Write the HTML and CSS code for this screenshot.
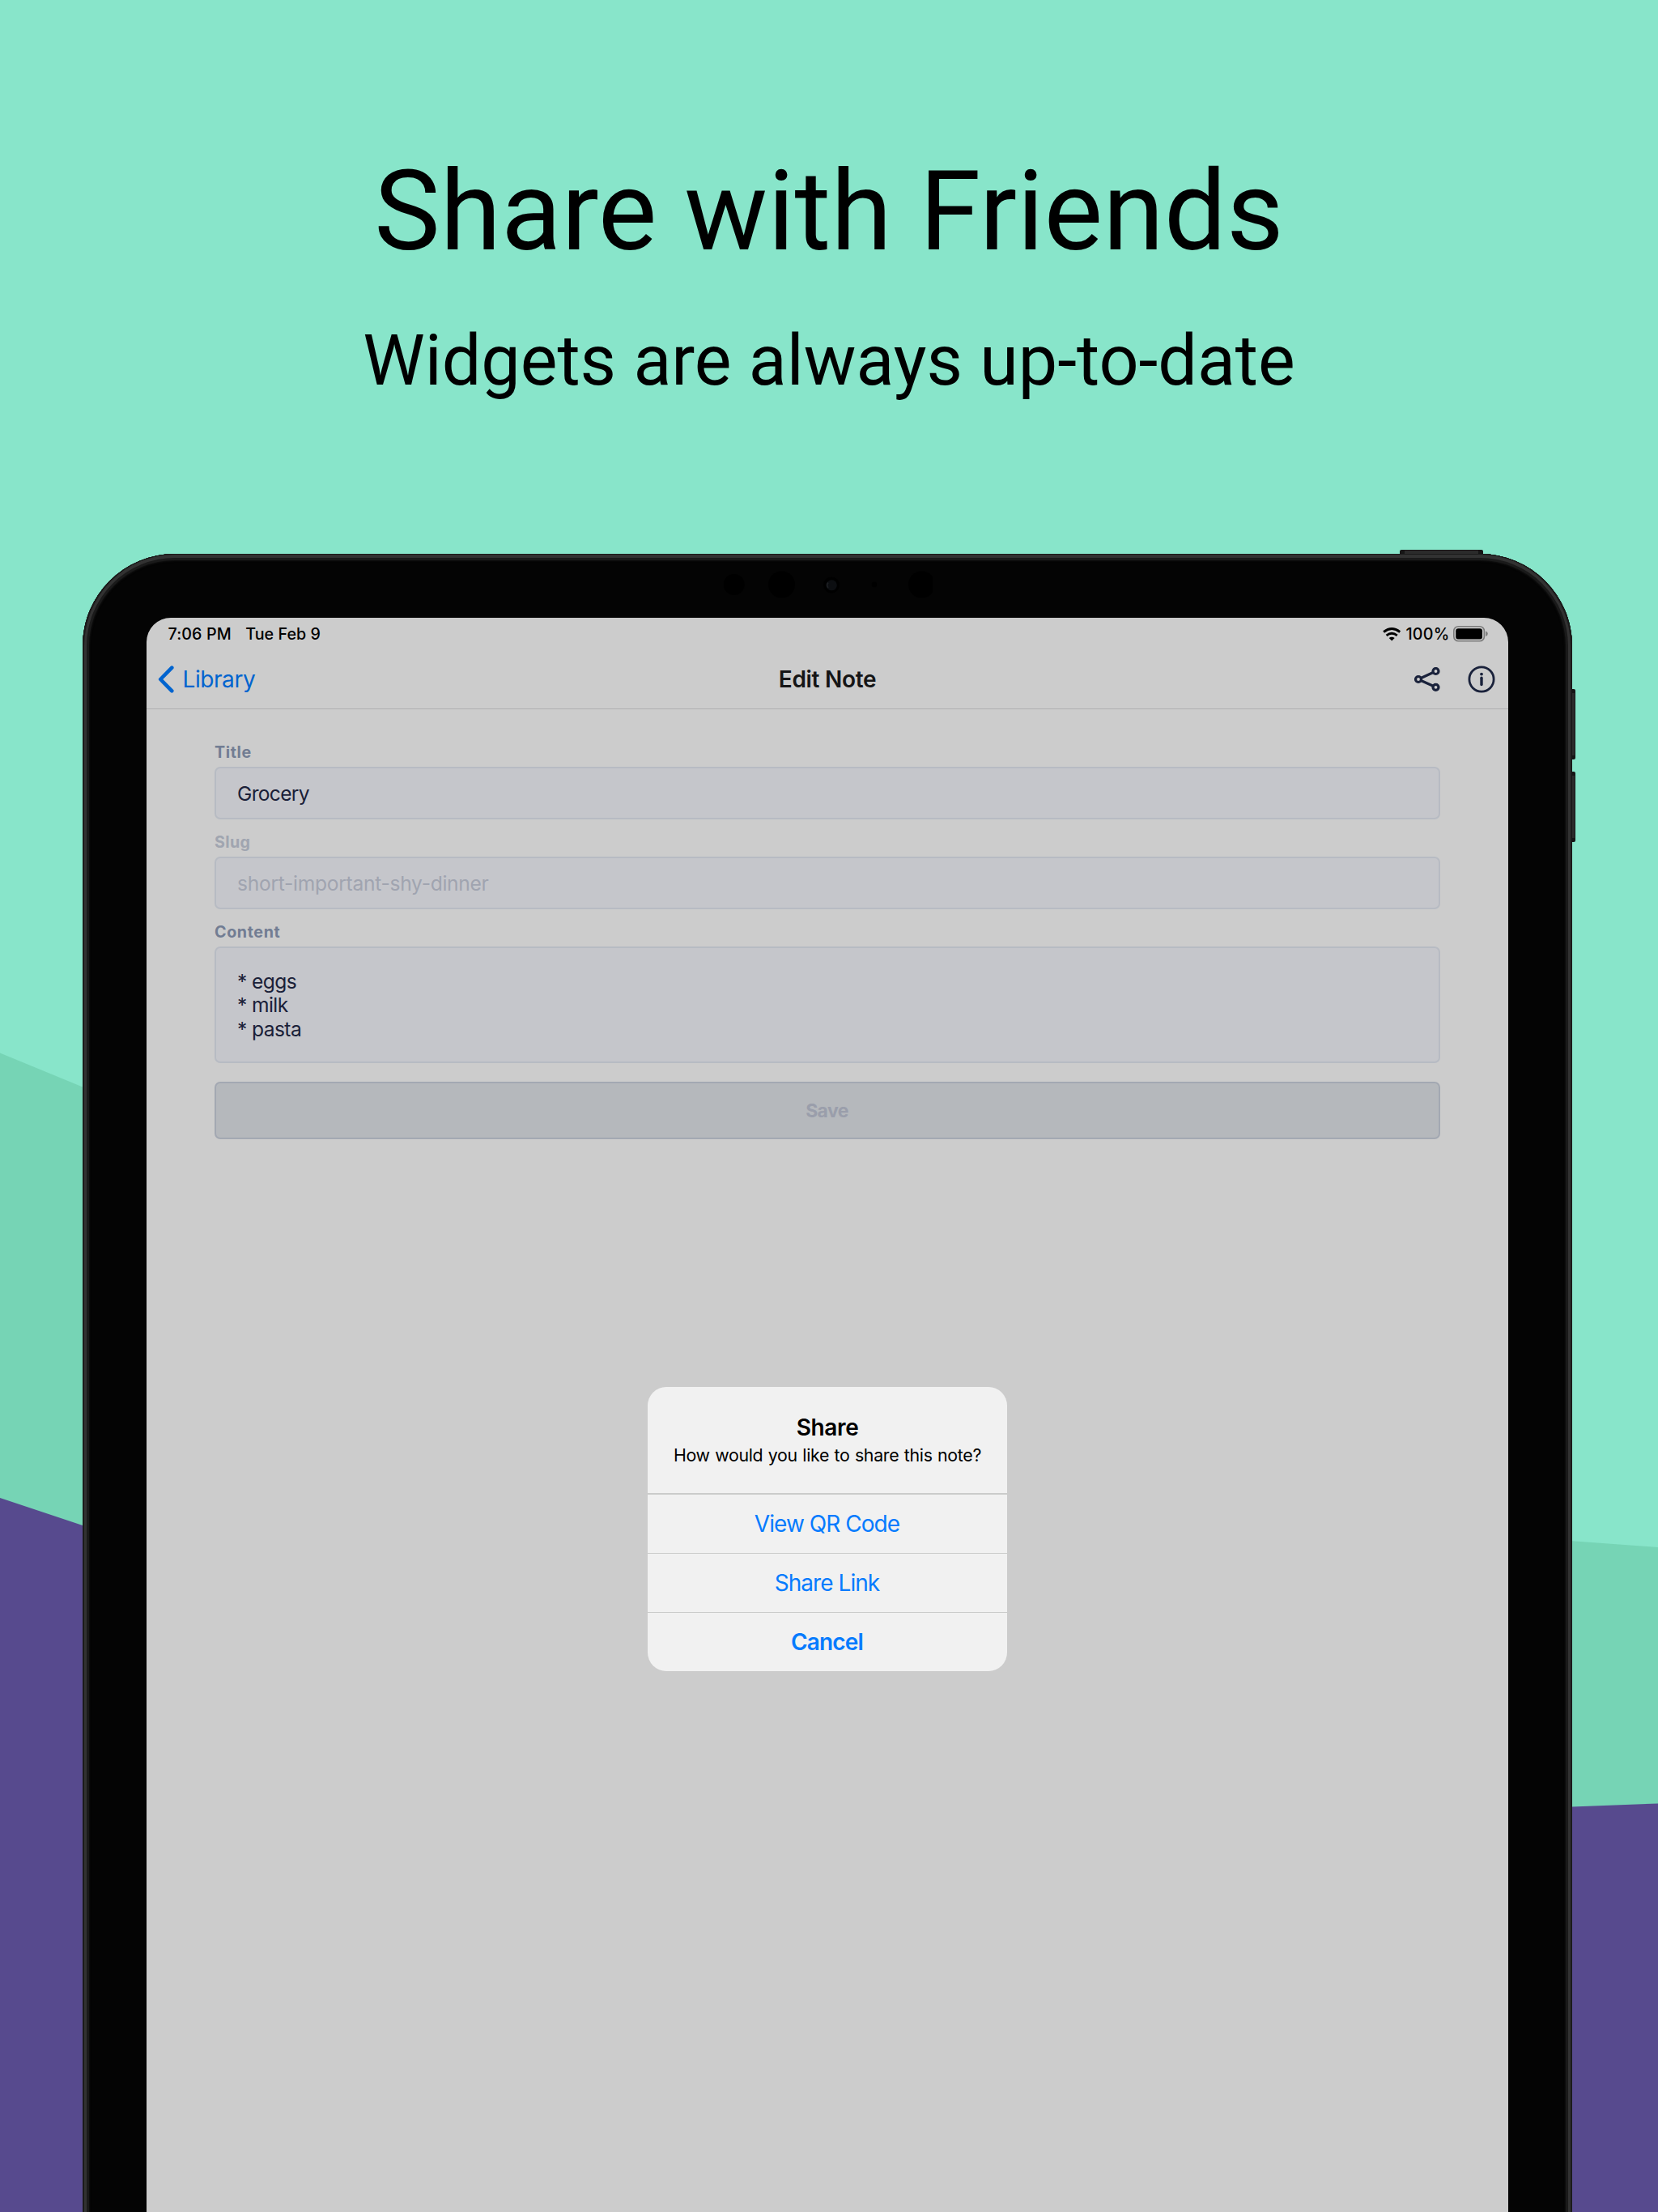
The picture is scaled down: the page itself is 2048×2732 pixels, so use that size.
FILE: index.html
```html
<!DOCTYPE html>
<html lang="en">
<head>
<meta charset="utf-8">
<title>Share with Friends</title>
<link rel="stylesheet" href="styles.css">
</head>
<body>
<main class="poster">
  <svg class="backdrop" viewBox="0 0 2048 2732" aria-hidden="true">
    <path fill="#76d4b5" d="M0 1300.5 L102 1342.5 L1000 1720 L1942 1903.3 L2048 1911 V2732 H0Z"/>
    <path fill="#574a8e" d="M0 1850 L102 1884 L1000 2180 L1942 2231.5 L2048 2227.5 V2732 H0Z"/>
  </svg>
  <header class="headline">
    <h1 class="headline-title">Share with Friends</h1>
    <p class="headline-sub">Widgets are always up-to-date</p>
  </header>
  <div class="tablet">
    <span class="key key-power"></span>
    <span class="key key-up"></span>
    <span class="key key-down"></span>
    <div class="bezel">
      <svg class="sensors" viewBox="0 0 260 40" aria-hidden="true">
        <g fill="#000">
          <circle cx="14.7" cy="20" r="13"/>
          <circle cx="73.5" cy="20" r="16.5"/>
          <circle cx="135" cy="20.5" r="10"/>
          <circle cx="188" cy="20" r="3.3"/>
          <circle cx="246.5" cy="20" r="16.5"/>
        </g>
        <circle cx="135.3" cy="20.8" r="6.5" fill="#0c0e11"/>
        <path d="M131 17.5 a5 5 0 0 0 0 6.5" fill="none" stroke="#1c1e22" stroke-width="2"/>
      </svg>
      <section class="screen">
        <div class="status">
          <div class="status-group">
            <span class="status-time">7:06 PM</span>
            <span class="status-date">Tue Feb 9</span>
          </div>
          <div class="status-group">
            <svg class="wifi" viewBox="0 0 22.4 17" aria-hidden="true">
              <g fill="none" stroke="#000">
                <path stroke-width="2.9" d="M1.1 5.5 Q11.2 -2.5 21.3 5.5"/>
                <path stroke-width="2.7" d="M4.6 9.9 Q11.2 4.6 17.8 9.9"/>
              </g>
              <path d="M7.7 13 Q11.2 10.4 14.7 13 L11.2 16.6Z"/>
            </svg>
            <span class="status-level">100%</span>
            <svg class="battery" viewBox="0 0 44 20" aria-hidden="true">
              <rect x=".8" y=".8" width="37.6" height="18" rx="5.5" fill="none" stroke="#7b7b7b" stroke-width="1.6"/>
              <rect x="3.2" y="3.2" width="32.8" height="13.2" rx="3" fill="#000"/>
              <path d="M40.2 6.6 Q42.8 7.6 42.8 9.8 T40.2 13Z" fill="#7b7b7b"/>
            </svg>
          </div>
        </div>
        <nav class="nav">
          <a class="back">
            <svg class="chevron" viewBox="0 0 20 34" aria-hidden="true">
              <path d="M17.3 2.7 L3.2 17 L17.3 31.3" fill="none" stroke="#0064cf" stroke-width="4.6" stroke-linecap="round" stroke-linejoin="round"/>
            </svg>
            <span>Library</span>
          </a>
          <h2 class="nav-title">Edit Note</h2>
          <div class="nav-actions">
            <svg class="share" viewBox="0 0 32 30" aria-hidden="true">
              <g fill="none" stroke="#1a223b" stroke-width="3.2">
                <circle cx="5" cy="15" r="3.5"/>
                <circle cx="26.5" cy="5" r="3.5"/>
                <circle cx="26.5" cy="24.8" r="3.5"/>
                <path d="M8.2 13.5 L23.3 6.5 M8.2 16.5 L23.3 23.3"/>
              </g>
            </svg>
            <svg class="info" viewBox="0 0 34 34" aria-hidden="true">
              <circle cx="17" cy="17" r="15.1" fill="none" stroke="#1a223b" stroke-width="2.8"/>
              <circle cx="17" cy="10.6" r="1.9" fill="#1a223b"/>
              <path d="M17 15.3 V23.6" stroke="#1a223b" stroke-width="3.4" stroke-linecap="round"/>
            </svg>
          </div>
        </nav>
        <form class="form">
          <div class="field">
            <span class="label">Title</span>
            <div class="input input-title">Grocery</div>
          </div>
          <div class="field field-disabled">
            <span class="label">Slug</span>
            <div class="input">short-important-shy-dinner</div>
          </div>
          <div class="field">
            <span class="label">Content</span>
            <div class="input input-area">* eggs
* milk
* pasta</div>
          </div>
          <div class="save">Save</div>
        </form>
        <div class="dialog">
          <div class="dialog-head">
            <h3 class="dialog-title">Share</h3>
            <p class="dialog-text">How would you like to share this note?</p>
          </div>
          <div class="action action-qr">View QR Code</div>
          <div class="action">Share Link</div>
          <div class="action action-cancel">Cancel</div>
        </div>
      </section>
    </div>
  </div>
</main>
</body>
</html>
```
FILE: styles.css
```css
* { box-sizing: border-box; }
body { margin: 0; }
h1, h2, h3, p { margin: 0; font-weight: 400; }
svg { display: block; flex: none; }

.poster {
  position: relative;
  width: 2048px;
  height: 2732px;
  overflow: hidden;
  background: #88e5ca;
  display: flex;
  flex-direction: column;
}
.backdrop { position: absolute; inset: 0; width: 2048px; height: 2732px; }

.headline {
  position: relative;
  height: 684px;
  flex: none;
  padding-top: 181px;
  text-align: center;
  font-family: Roboto, sans-serif;
  color: #000;
}
.headline-title { font-size: 137px; line-height: 160px; }
.headline-sub { font-size: 86.2px; line-height: 100px; margin-top: 55px; }

/* The tablet runs past the bottom edge of the poster. */
.tablet {
  position: relative;
  flex: none;
  height: 2100px;
  width: 1840px;
  margin-left: 102px;
}
.bezel {
  position: relative;
  height: 100%;
  padding: 79px 79px 0;
  border-radius: 114px 114px 0 0;
  background: #040404;
  box-shadow:
    inset 0 1px 0 #1a1a1a,
    inset 2px 0 0 #1b1b1b,
    inset -2px 0 0 #1b1b1b,
    inset 0 0 0 5px #323232,
    inset 0 0 0 8px #1a1a1a,
    inset 0 0 2px 9px #101010;
}
.key { position: absolute; background: #2b2b2b; border: 0 solid #161616; }
.key-power { left: 1627px; top: -5px; width: 103px; height: 10px; border-width: 1px 6px 0; border-radius: 2px 2px 0 0; }
.key-up, .key-down { left: 1834px; width: 10px; height: 87px; border-width: 5px 1px 5px 0; border-radius: 0 2px 2px 0; }
.key-up { top: 167px; }
.key-down { top: 269px; }
.sensors { position: absolute; left: 790px; top: 18px; width: 260px; height: 40px; }

.screen {
  position: relative;
  height: 100%;
  background: #ccc;
  border-radius: 30px 30px 0 0;
  font-family: Inter, sans-serif;
  color: #1a2038;
}

.status {
  height: 40px;
  padding: 0 24px 0 26.5px;
  display: flex;
  justify-content: space-between;
  align-items: center;
  font-size: 19.7px;
  font-weight: 500;
  color: #000;
}
.status-group { display: flex; align-items: center; }
.status-time { letter-spacing: .1px; }
.status-date { margin-left: 17.5px; letter-spacing: .05px; }
.wifi { width: 22.4px; height: 17px; }
.status-level { margin-left: 6.5px; letter-spacing: .24px; }
.battery { width: 44px; height: 20px; margin-left: 4.5px; }

.nav {
  height: 73px;
  padding: 0 16px 0 14px;
  border-bottom: 1px solid #b0b0b1;
  display: grid;
  grid-template-columns: 1fr auto 1fr;
  align-items: center;
  font-size: 28px;
}
.back { display: flex; align-items: center; color: #0064cf; letter-spacing: -.42px; }
.chevron { width: 20px; height: 34px; margin-right: 10.5px; }
.nav-title { padding-left: 2px; font-size: 28px; font-weight: 600; letter-spacing: -.29px; color: #151516; }
.nav-actions { display: flex; justify-content: flex-end; align-items: center; gap: 34px; }
.share { width: 32px; height: 30px; }
.info { width: 34px; height: 34px; }

.form { padding: 40.3px 84px 0; display: flex; flex-direction: column; }
.field { margin-bottom: 14.6px; }
.label {
  display: block;
  padding-top: 1px;
  height: 24px;
  margin: 0 0 6.8px;
  font-size: 19.7px;
  line-height: 24px;
  font-weight: 700;
  letter-spacing: .6px;
  color: #727d93;
}
.input {
  height: 65.4px;
  padding: 1px 26px 0;
  border: 2px solid #b7bbc3;
  border-radius: 7px;
  background: #c5c6cb;
  font-size: 24.6px;
  line-height: 61.4px;
  letter-spacing: -.29px;
  color: #1a2038;
}
.input-title { letter-spacing: -.7px; }
.field-disabled .label { color: #a0a5b0; letter-spacing: .35px; }
.field-disabled .input { color: #a0a4b0; }
.input-area {
  height: 144.3px;
  padding-top: 27px;
  line-height: 29.7px;
  white-space: pre;
  letter-spacing: -.6px;
}
.save {
  height: 71px;
  margin-top: 8.4px;
  padding: 1px 1px 0 0;
  border: 2px solid #a3a8b2;
  border-radius: 7px;
  background: #b5b8bc;
  font-size: 23px;
  font-weight: 700;
  line-height: 67px;
  letter-spacing: -.6px;
  text-align: center;
  color: #9a9eab;
}

.dialog {
  position: absolute;
  left: 619px;
  top: 950px;
  width: 444px;
  height: 351px;
  border-radius: 23px;
  background: #f1f1f1;
  display: flex;
  flex-direction: column;
  text-align: center;
  color: #000;
}
.dialog-head { height: 131px; padding-top: 33px; }
.dialog-title { font-size: 28px; line-height: 34px; font-weight: 600; letter-spacing: -.36px; }
.dialog-text { margin-top: 4px; font-size: 21.35px; line-height: 26px; letter-spacing: -.3px; word-spacing: .7px; }
.action {
  flex: 1;
  padding-right: 1px;
  border-top: 1.5px solid #cbcccb;
  font-size: 28px;
  line-height: 72px;
  letter-spacing: -.95px;
  color: #067bfe;
}
.action-qr { border-top-width: 2px; }
.action-cancel { font-weight: 600; letter-spacing: -.84px; }
```
